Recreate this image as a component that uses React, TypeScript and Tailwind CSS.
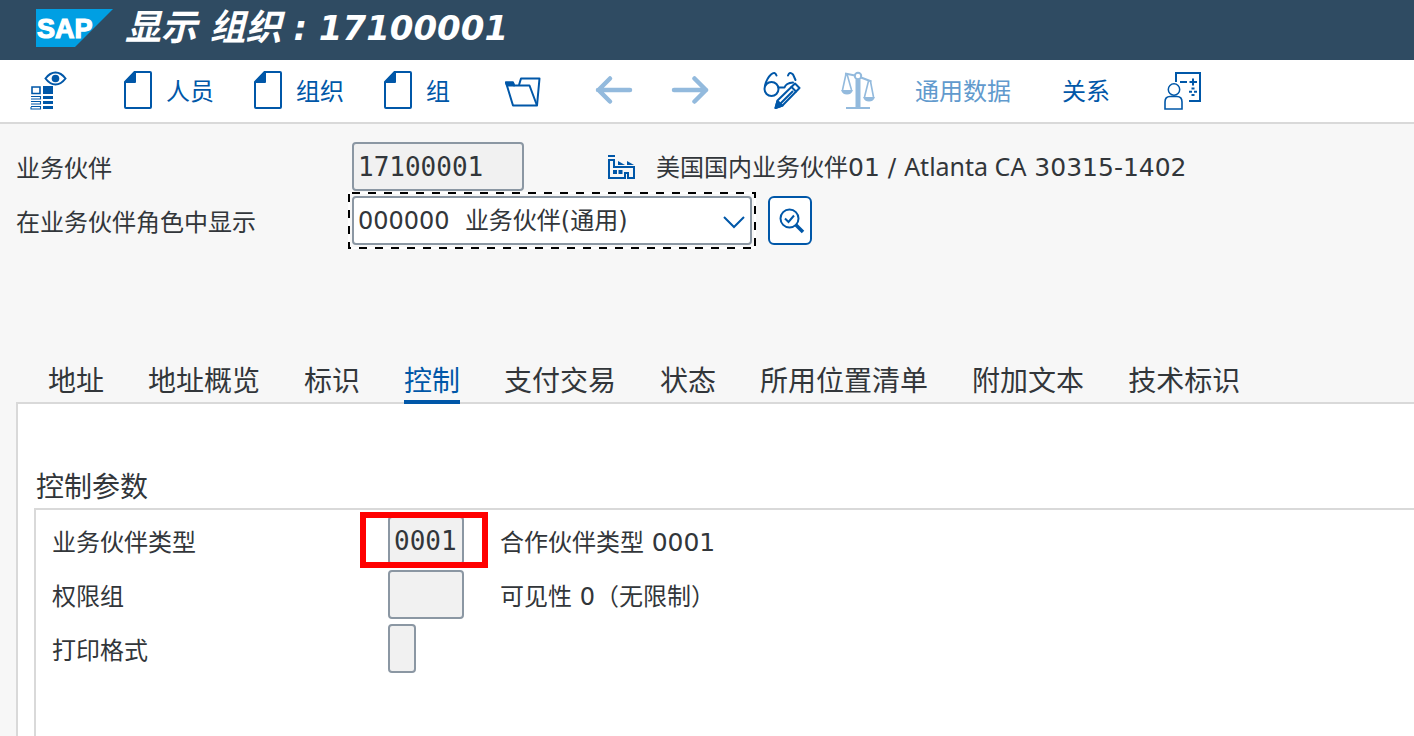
import type { ReactNode } from "react";

function ViewIcon() {
  return (
    <svg width="40" height="40" viewBox="0 0 40 40" fill="none" stroke="#0057a8" aria-hidden="true">
      <path d="M15.5 8.5Q20 2.500 25.5 2.500T35.5 8.5Q31 14.500 25.500 14.500T15.5 8.5Z" strokeWidth="2" />
      <circle cx="25.500" cy="8.500" r="3.800" fill="#0057a8" stroke="none" />
      <path d="M2 17h8v6.500h-8z" strokeWidth="1.600" />
      <path d="M13 16h10v8H13zM13 26h10v3H13zM13 31h10v3H13zM13 36h10v3H13z" fill="#0057a8" stroke="none" />
      <path d="M1 26.500h9.500v2.500h-9.500M1 31.500h9.500v2.500h-9.500M1 36.500h9.500v2.500h-9.500v-2" strokeWidth="1.100" />
    </svg>
  );
}

function PageIcon() {
  return (
    <svg width="28" height="38" viewBox="0 0 28 38" fill="none" aria-hidden="true">
      <path d="M10.500 1H26a1 1 0 0 1 1 1V36a1 1 0 0 1-1 1H2a1 1 0 0 1-1-1V11Z" stroke="#0057a8" strokeWidth="2" />
      <path d="M10.500 1H12V11a1 1 0 0 1-1 1H1V11Z" fill="#0057a8" />
    </svg>
  );
}

function FolderIcon() {
  return (
    <svg width="37" height="34" viewBox="-1 -3 37 34" fill="none" stroke="#0057a8" strokeWidth="2" strokeLinejoin="round" aria-hidden="true">
      <path d="M1 6.500H8L9 9.500H24.500L32 29.500H8Z" />
      <path d="M1 6.500H8L9 9.500H2Z" fill="#0057a8" />
      <path d="M14 9L16 2.500H34.500L32 29.500" />
    </svg>
  );
}

function BackIcon() {
  return (
    <svg width="38" height="32" viewBox="0 0 38 32" fill="none" stroke="#93badd" strokeWidth="4.500" strokeLinecap="round" strokeLinejoin="round" aria-hidden="true">
      <path d="M35 16H3M15 4.500L3.500 16L15 27.500" />
    </svg>
  );
}

function ForwardIcon() {
  return (
    <svg width="38" height="32" viewBox="0 0 38 32" fill="none" stroke="#93badd" strokeWidth="4.500" strokeLinecap="round" strokeLinejoin="round" aria-hidden="true">
      <path d="M3 16H35M23.500 4.500L35 16L23.500 27.500" />
    </svg>
  );
}

function GlassesIcon() {
  return (
    <svg width="38" height="38" viewBox="0 0 38 38" fill="none" stroke="#0057a8" strokeWidth="2" strokeLinecap="round" strokeLinejoin="round" aria-hidden="true">
      <circle cx="8.500" cy="18" r="7" />
      <path d="M2 14.500Q4 7 8 3.500Q12 0 13.500 4.500M25 4.500Q26.500 0 30 3.500Q31 5.500 32.500 9" />
      <path d="M15.500 16.500H21.500Q23 12 30 11.500" />
      <path d="M12.500 37L14.500 29.500L32 12.500L36.500 17L19.500 34.500Z" />
      <path d="M12.500 37L14.500 30L19.500 34.500Z" fill="#0057a8" />
      <path d="M28.500 16L33 20.500M18 32L29.500 20.500" />
    </svg>
  );
}

function ScalesIcon() {
  return (
    <svg width="34" height="38" viewBox="0 0 34 38" fill="none" stroke="#93badd" strokeWidth="1.600" aria-hidden="true">
      <circle cx="17" cy="5" r="3.200" strokeWidth="2" />
      <path d="M4 2.500L14 4.500M20 6.500L30.500 10.500" strokeWidth="2" />
      <path d="M5 3L1.500 19M6 3L10.500 19M27.500 10L23.500 26M29.500 10.500L32.500 26" />
      <path d="M0 19H12Q10.500 23.500 6 23.500T0 19ZM22 26H34Q32.500 30.500 28 30.500T22 26Z" fill="#93badd" stroke="none" />
      <path d="M17 8.500V37" strokeWidth="5" />
      <path d="M5 37H29" strokeWidth="2" />
    </svg>
  );
}

function PersonBoardIcon() {
  return (
    <svg width="38" height="40" viewBox="0 0 38 40" fill="none" stroke="#0057a8" strokeWidth="2" aria-hidden="true">
      <circle cx="10" cy="19.500" r="5.700" strokeWidth="1.500" />
      <path d="M1 39V32Q1 26.500 6 26.500H13Q18 26.500 18 32V39Z" strokeWidth="1.600" />
      <path d="M12 12V3H36V31H25" />
      <path d="M16 12H23M25.500 12H33M29 8.500V15.500" />
      <path d="M27.500 18.500h3M27.500 25h3M25 21.800h3M30 21.800h3" />
    </svg>
  );
}

function FactoryIcon() {
  return (
    <svg width="28" height="26" viewBox="0 0 28 26" fill="none" stroke="#0057a8" strokeWidth="2" aria-hidden="true">
      <path d="M0 2H7" />
      <path d="M1 24V6H6V13H26V24H20V19H17V24Z" />
      <path d="M10 7L17 11H10ZM19 7L26 11H19Z" fill="#0057a8" stroke="none" />
      <path d="M5 16H9V20H5ZM10.500 16H14.500V20H10.500Z" fill="#0057a8" stroke="none" />
    </svg>
  );
}

function SearchCheckIcon() {
  return (
    <svg width="26" height="26" viewBox="0 0 26 26" fill="none" stroke="#0057a8" strokeWidth="2" aria-hidden="true">
      <circle cx="10.500" cy="10.500" r="9" />
      <path d="M6 10.500L9.500 14L15 7.500" />
      <path d="M17 17L24 24" strokeWidth="3.500" />
    </svg>
  );
}

function SapLogo() {
  return (
    <svg width="77" height="38" viewBox="0 0 77 38" role="img" aria-label="SAP">
      <path d="M0 0H77L39 38H0Z" fill="#009fe3" />
      <text x="1" y="29" fill="#fff" stroke="#fff" strokeWidth="1.200" fontFamily="Liberation Sans, Arial, sans-serif" fontWeight="700" fontSize="27">
        SAP
      </text>
    </svg>
  );
}

function ToolButton({ label, icon, text, disabled }: { label: string; icon?: ReactNode; text?: boolean; disabled?: boolean }) {
  return (
    <button
      type="button"
      aria-label={label}
      disabled={disabled}
      className="flex shrink-0 items-center gap-3.5 whitespace-nowrap text-[#0057a8] disabled:text-[#619acd]"
    >
      {icon}
      {text && <span className="pt-1">{label}</span>}
    </button>
  );
}

const digits = "text-[25px] leading-8";
const field = "h-[49px] rounded-sm border-2 border-[#8b97a3] bg-[#f1f1f1] pl-1 font-['DejaVu_Sans_Mono',monospace] text-[26px] text-[#32363a]";
const fieldRow = "flex h-[49px] items-center";
const fieldLabel = "w-[336px] shrink-0 pt-1";
const tabs = ["地址", "地址概览", "标识", "控制", "支付交易", "状态", "所用位置清单", "附加文本", "技术标识"];

export default function App() {
  return (
    <div className="flex min-h-screen flex-col overflow-hidden bg-[#f7f7f7] font-['DejaVu_Sans','Noto_Sans_CJK_SC',sans-serif] text-2xl leading-8 text-[#32363a]">
      <header className="flex h-15 shrink-0 items-center gap-3 bg-[#2f4b62] pb-1 pl-9 text-white">
        <SapLogo />
        <h1 className="whitespace-nowrap text-[36px] leading-[52px] font-bold italic">
          显示 组织<span className="text-[34px]"> : 17100001</span>
        </h1>
      </header>

      <nav aria-label="工具栏" className="flex h-16 shrink-0 items-center gap-[54px] border-b-2 border-[#d9d9d9] bg-white pb-0.5 pl-[30px]">
        <ToolButton label="显示角色" icon={<ViewIcon />} />
        <div className="flex gap-10">
          <ToolButton label="人员" icon={<PageIcon />} text />
          <ToolButton label="组织" icon={<PageIcon />} text />
          <ToolButton label="组" icon={<PageIcon />} text />
        </div>
        <ToolButton label="打开" icon={<FolderIcon />} />
        <div className="flex gap-[38px]">
          <ToolButton label="后退" icon={<BackIcon />} disabled />
          <ToolButton label="前进" icon={<ForwardIcon />} disabled />
        </div>
        <div className="flex gap-[51px]">
          <div className="flex gap-10">
            <ToolButton label="显示或更改" icon={<GlassesIcon />} />
            <ToolButton label="比较" icon={<ScalesIcon />} disabled />
            <ToolButton label="通用数据" text disabled />
          </div>
          <ToolButton label="关系" text />
        </div>
        <ToolButton label="人员关系" icon={<PersonBoardIcon />} />
      </nav>

      <main className="flex grow flex-col pl-4">
        <div className="mt-[18px] flex h-[49px] items-center">
          <label htmlFor="partner" className={fieldLabel}>业务伙伴</label>
          <input id="partner" readOnly defaultValue="17100001" className={`${field} w-[172px]`} />
          <span className="ml-[84px] flex items-center gap-5 whitespace-nowrap">
            <FactoryIcon />
            <span>
              美国国内业务伙伴
              <span className={digits}>
                01 / <span className="font-['Noto_Sans',sans-serif]">Atlanta CA</span> 30315-1402
              </span>
            </span>
          </span>
        </div>
        <div className="mt-px flex h-[57px] items-center">
          <label htmlFor="role" className="w-[332px] shrink-0 pt-1">在业务伙伴角色中显示</label>
          <div className="p-1 [background:repeating-linear-gradient(90deg,#fff_0_4px,#000_4px_12px,#fff_12px_16px)_top/100%_2px_no-repeat,repeating-linear-gradient(90deg,#000_0_3px,#fff_3px_11px,#000_11px_16px)_bottom/100%_2px_no-repeat,repeating-linear-gradient(#fff_0_2px,#000_2px_10px,#fff_10px_16px)_left/2px_100%_no-repeat,repeating-linear-gradient(#000_0_6px,#fff_6px_14px,#000_14px_16px)_right/2px_100%_no-repeat]">
            <div className="relative">
              <select id="role" className="block h-[49px] w-[400px] appearance-none rounded-sm border-2 border-[#8b97a3] bg-white pl-1 outline-none">
                <option>{"000000\u00a0\u00a0业务伙伴(通用)"}</option>
              </select>
              <svg className="pointer-events-none absolute top-4 right-1.5" width="24" height="20" viewBox="0 0 24 20" fill="none" stroke="#0057a8" strokeWidth="2" aria-hidden="true">
                <path d="M2 5L12 15L22 5" />
              </svg>
            </div>
          </div>
          <button type="button" aria-label="检查角色" className="ml-3 flex h-[49px] w-11 items-center justify-center rounded-md border-2 border-[#0057a8] bg-white pl-1">
            <SearchCheckIcon />
          </button>
        </div>

        <div role="tablist" className="mt-[109px] flex gap-11 whitespace-nowrap pl-8 text-[28px] leading-9">
          {tabs.map((t) => (
            <button
              key={t}
              type="button"
              role="tab"
              aria-selected={t === "控制"}
              className="relative z-10 -mb-0.5 h-[46px] border-b-4 border-transparent pt-1.5 aria-selected:border-[#0057a8] aria-selected:text-[#0057a8]"
            >
              {t}
            </button>
          ))}
        </div>

        <section className="flex grow flex-col border-t-2 border-l-2 border-[#d9d9d9] bg-white pt-16 pl-4">
          <h2 className="h-10 pt-0.5 pl-0.5 text-[28px] leading-9">控制参数</h2>
          <div className="flex grow flex-col gap-[5px] border-t-2 border-l-2 border-[#d9d9d9] pt-1.5 pl-4">
            <div className={fieldRow}>
              <label htmlFor="type" className={fieldLabel}>业务伙伴类型</label>
              <div className="relative">
                <input id="type" readOnly defaultValue="0001" className={`${field} block w-[76px]`} />
                <span className="pointer-events-none absolute -top-1 -right-6 -bottom-[3px] -left-7 border-6 border-[#ff0000]" />
              </div>
              <span className="ml-9 pt-1">合作伙伴类型 <span className={digits}>0001</span></span>
            </div>
            <div className={fieldRow}>
              <label htmlFor="group" className={fieldLabel}>权限组</label>
              <input id="group" readOnly className={`${field} w-[76px]`} />
              <span className="ml-9 pt-1">可见性 0（无限制）</span>
            </div>
            <div className={fieldRow}>
              <label htmlFor="format" className={fieldLabel}>打印格式</label>
              <input id="format" readOnly className={`${field} w-7`} />
            </div>
          </div>
        </section>
      </main>
    </div>
  );
}
